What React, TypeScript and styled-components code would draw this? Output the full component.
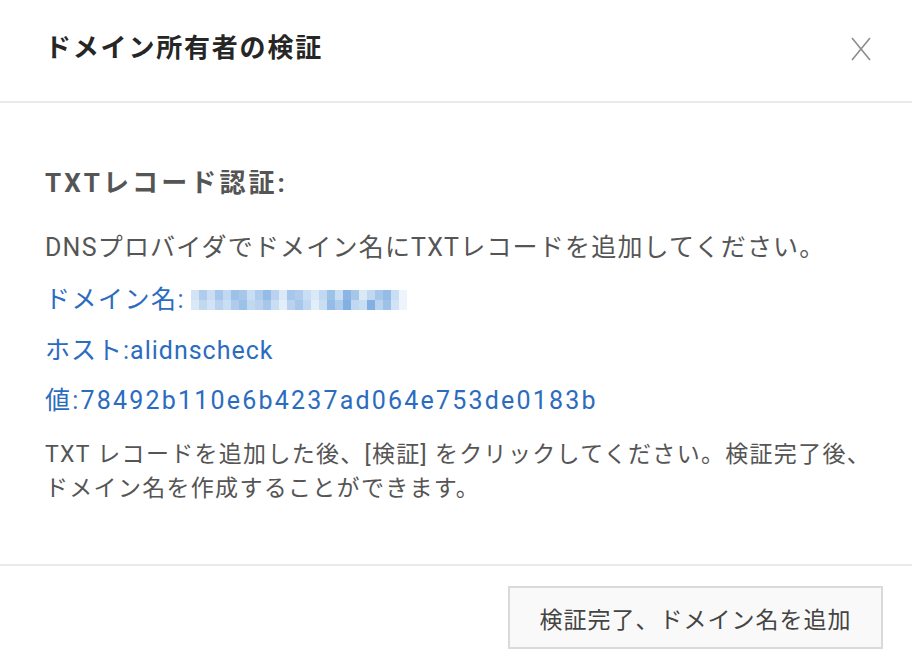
import React from 'react'
import styled, { createGlobalStyle } from 'styled-components'

const GlobalStyle = createGlobalStyle`
  html, body {
    margin: 0;
    padding: 0;
    background: #ffffff;
  }
  body {
    font-family: Roboto, "Noto Sans CJK JP", sans-serif;
  }
`

// light-blue mosaic that hides the domain name
const mosaic = [
  [0.25, 0.45, 0.3, 0.5, 0.35, 0.55, 0.5, 0.3, 0.45, 0.6, 0.4, 0.2, 0.5, 0.45, 0.3, 0.2, 0.35, 0.55, 0.3, 0.65, 0.5, 0.2, 0.35, 0.5, 0.6, 0.3, 0.1],
  [0.2, 0.35, 0.25, 0.4, 0.3, 0.45, 0.55, 0.35, 0.4, 0.5, 0.3, 0.15, 0.4, 0.5, 0.35, 0.15, 0.3, 0.6, 0.45, 0.7, 0.35, 0.3, 0.7, 0.4, 0.55, 0.25, 0.1],
]

export default function App() {
  return (
    <>
      <GlobalStyle />
      <Div_Dialog>
        <Div_Header>
          <H2_Title>ドメイン所有者の検証</H2_Title>
          <Button_Close aria-label='close'>
            <svg width='22' height='26' viewBox='0 0 22 26'>
              <path d='M2 2 L20 24 M20 2 L2 24' stroke='#8c8c8c' strokeWidth='1.6' fill='none' />
            </svg>
          </Button_Close>
        </Div_Header>
        <Div_Body>
          <H3_Section>TXTレコード認証:</H3_Section>
          <P_Text size={25} spacing={1.2} gap={29}>
            DNSプロバイダでドメイン名にTXTレコードを追加してください。
          </P_Text>
          <P_Link gap={16} spacing={1.5}>
            ドメイン名:
            <Span_Mosaic>
              {mosaic.map((row, r) => (
                <Div_MosaicRow key={r}>
                  {row.map((a, c) => (
                    <Span_Cell key={c} style={{ opacity: a }} />
                  ))}
                </Div_MosaicRow>
              ))}
            </Span_Mosaic>
          </P_Link>
          <P_Link gap={15} spacing={1}>ホスト:alidnscheck</P_Link>
          <P_Link gap={14} spacing={2.2}>値:78492b110e6b4237ad064e753de0183b</P_Link>
          <P_Text size={23} spacing={1.3} gap={19} lineHeight={34}>
            TXT レコードを追加した後、[検証] をクリックしてください。検証完了後、
            <br />
            ドメイン名を作成することができます。
          </P_Text>
        </Div_Body>
        <Div_Footer>
          <Button_Confirm>検証完了、ドメイン名を追加</Button_Confirm>
        </Div_Footer>
      </Div_Dialog>
    </>
  )
}

const Div_Dialog = styled.div`
  width: 912px;
  height: 664px;
  display: flex;
  flex-direction: column;
  background: #ffffff;
  overflow: hidden;
`

const Div_Header = styled.div`
  height: 101px;
  flex-shrink: 0;
  display: flex;
  align-items: center;
  justify-content: space-between;
  padding: 0 40px 0 45px;
  border-bottom: 2px solid #e9eaeb;
  box-sizing: content-box;
`

const H2_Title = styled.h2`
  margin: 0 0 6px;
  font-size: 26px;
  font-weight: 700;
  letter-spacing: 1.8px;
  color: #262626;
  line-height: 36px;
`

const Button_Close = styled.button`
  border: none;
  background: transparent;
  padding: 0;
  margin-bottom: 4px;
  display: flex;
  cursor: pointer;
`

const Div_Body = styled.div`
  flex: 1;
  display: flex;
  flex-direction: column;
  padding: 0 45px;
`

const H3_Section = styled.h3`
  margin: 62px 0 0;
  font-size: 26px;
  font-weight: 700;
  letter-spacing: 3.1px;
  line-height: 36px;
  color: #555555;
`

const P_Text = styled.p<{ size: number; spacing: number; gap: number; lineHeight?: number }>`
  margin: ${(p) => p.gap}px 0 0;
  font-size: ${(p) => p.size}px;
  letter-spacing: ${(p) => p.spacing}px;
  line-height: ${(p) => p.lineHeight ?? 36}px;
  color: #555555;
  white-space: nowrap;
`

const P_Link = styled.p<{ gap: number; spacing: number }>`
  margin: ${(p) => p.gap}px 0 0;
  font-size: 25px;
  letter-spacing: ${(p) => p.spacing}px;
  line-height: 36px;
  color: #2b6cbf;
  display: flex;
  align-items: center;
  white-space: nowrap;
`

const Span_Mosaic = styled.span`
  display: inline-flex;
  flex-direction: column;
  margin-left: 6px;
`

const Div_MosaicRow = styled.span`
  display: flex;
`

const Span_Cell = styled.span`
  width: 8px;
  height: 10px;
  background: #4d8fd6;
`

const Div_Footer = styled.div`
  flex-shrink: 0;
  border-top: 2px solid #e9eaeb;
  display: flex;
  justify-content: flex-end;
  padding: 20px 29px 15px;
`

const Button_Confirm = styled.button`
  width: 375px;
  height: 63px;
  background: #f9f9f9;
  border: 2px solid #dadada;
  font-family: Roboto, "Noto Sans CJK JP", sans-serif;
  font-size: 23px;
  letter-spacing: 1px;
  color: #444444;
  cursor: pointer;
`
